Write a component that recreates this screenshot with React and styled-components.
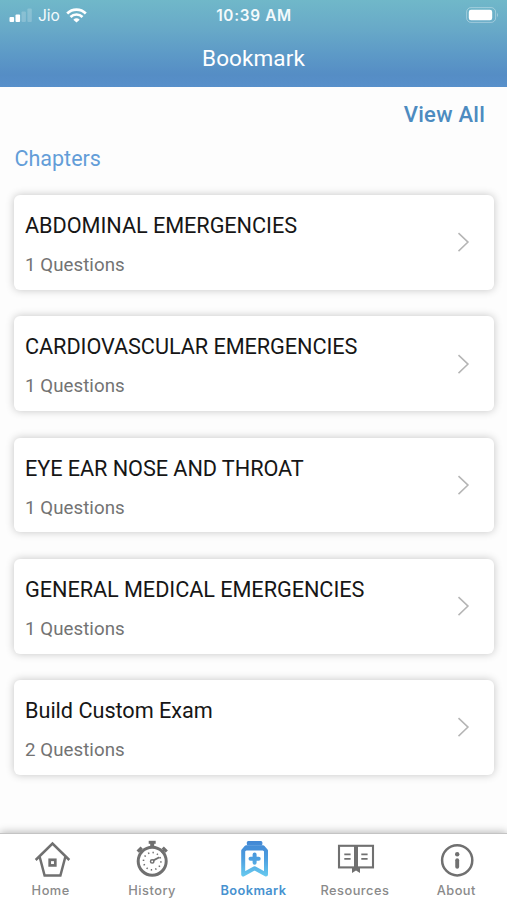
import React from 'react';
import styled, { createGlobalStyle } from 'styled-components';

const GlobalStyle = createGlobalStyle`
  * { box-sizing: border-box; }
  body { margin: 0; background: #fdfdfd; font-family: Roboto, "Liberation Sans", sans-serif; }
`;

const Screen = styled.div`
  display: flex;
  flex-direction: column;
  width: 507px;
  height: 900px;
  overflow: hidden;
  background: #fdfdfd;
`;

const Header = styled.header`
  flex: none;
  height: 87px;
  background: linear-gradient(180deg, #70b8c9 0%, #69abc8 30%, #5d9ac7 62%, #558dc5 86%, #5890cb 100%);
  color: #fff;
`;

const StatusBar = styled.div`
  display: grid;
  grid-template-columns: 1fr auto 1fr;
  align-items: center;
  height: 30px;
  padding: 0 8px 0 9px;
  color: #f3fafc;
`;

const Carrier = styled.div`
  display: flex;
  align-items: center;
  gap: 6px;
  font: 400 15.5px/30px Inter, sans-serif;

  svg { margin-top: -1px; }
`;

const Clock = styled.div`
  padding-top: 1px;
  font: 600 15.3px/30px Inter, sans-serif;
  letter-spacing: 0.7px;
`;

const BatterySlot = styled.div`
  display: flex;
  justify-content: flex-end;

  svg { margin-top: -1px; }
`;

const Title = styled.h1`
  margin: 0;
  padding-top: 13.5px;
  text-align: center;
  font-size: 22.5px;
  line-height: 28px;
  font-weight: 400;
  letter-spacing: 0.1px;
`;

const Content = styled.main`
  flex: 1;
  min-height: 0;
  padding: 14px 13px 0 14px;
`;

const ViewAll = styled.div`
  padding-right: 9px;
  text-align: right;
  font-size: 22px;
  line-height: 28px;
  font-weight: 500;
  letter-spacing: 0.25px;
  color: #4d8bc0;
`;

const SectionTitle = styled.h2`
  margin: 15.6px 0 22.4px;
  padding-left: 0.5px;
  font-size: 21.5px;
  line-height: 28px;
  font-weight: 400;
  letter-spacing: 0;
  color: #639dd8;
`;

const CardList = styled.div`
  display: flex;
  flex-direction: column;
  gap: 26.6px;
`;

const Card = styled.article`
  display: flex;
  align-items: center;
  justify-content: space-between;
  height: 94.7px;
  padding: 0 24px 0 11px;
  border-radius: 6px;
  background: #fff;
  box-shadow: 0 0 8px rgba(0, 0, 0, 0.23);
`;

const CardText = styled.div`
  padding-top: 5.4px;
`;

const CardTitle = styled.h3`
  margin: 0;
  font-size: 21.7px;
  line-height: 28px;
  font-weight: 400;
  letter-spacing: ${(p) => p.$tracking}px;
  color: #161616;
`;

const CardMeta = styled.p`
  margin: 12px 0 0;
  font-size: 18.7px;
  line-height: 26px;
  letter-spacing: 0.05px;
  color: #737373;
`;

const TabBar = styled.nav`
  flex: none;
  display: grid;
  grid-template-columns: repeat(5, 1fr);
  height: 67px;
  border-top: 1px solid #c4c4c4;
  background: #fff;
  box-shadow: 0 -1px 8px rgba(0, 0, 0, 0.28);
`;

const Tab = styled.div`
  display: flex;
  flex-direction: column;
  align-items: center;
  padding-top: 5px;
  color: ${(p) => (p.$active ? '#4792d0' : '#8a8a8a')};
  font-family: Inter, sans-serif;
  font-size: 12.8px;
  line-height: 18px;
  font-weight: ${(p) => (p.$active ? 600 : 500)};
  letter-spacing: ${(p) => p.$tracking}px;

  svg { display: block; margin-bottom: 3px; }
`;

const SignalIcon = () => (
  <svg width="23" height="14" viewBox="0 0 23 14" fill="#fff">
    <rect x="0.5" y="9" width="4.6" height="5" rx="1" />
    <rect x="6.5" y="6.5" width="4.6" height="7.5" rx="1" />
    <rect x="12.5" y="3.5" width="4.4" height="10.5" rx="1" opacity=".2" />
    <rect x="18.4" y="0.5" width="4.4" height="13.5" rx="1" opacity=".2" />
  </svg>
);

const WifiIcon = () => (
  <svg width="21" height="15" viewBox="0 0 21 15" fill="none" stroke="#fff" strokeWidth="2.7">
    <path d="M1.2 5.5a13.2 13.2 0 0 1 18.6 0" />
    <path d="M4.5 9a8.5 8.5 0 0 1 12 0" />
    <path d="M10.5 14.6 7.3 11.7a4.7 4.7 0 0 1 6.4 0Z" fill="#fff" stroke="none" />
  </svg>
);

const BatteryIcon = () => (
  <svg width="33" height="16" viewBox="0 0 33 16">
    <rect x=".6" y=".6" width="29" height="14.8" rx="4.4" fill="none" stroke="#fff" strokeOpacity=".35" />
    <rect x="2.8" y="2.8" width="23.4" height="10.4" rx="2.2" fill="#fff" />
    <path d="M31 5.6q1.6 2.4 0 4.8Z" fill="#fff" opacity=".5" />
  </svg>
);

const Chevron = () => (
  <svg width="13" height="20" viewBox="0 0 13 20" fill="none" stroke="#b5b5b5" strokeWidth="1.5">
    <path d="M1.5 1.1 11 10.1 1.5 19.1" />
  </svg>
);

const HomeIcon = () => (
  <svg width="40" height="40" viewBox="0 0 40 40" fill="none" stroke="#707070" strokeWidth="2.5">
    <path d="M4.7 21 21.5 4.6 38.3 21" />
    <path d="M8.7 18 13.6 36.6h15.8L34.3 18" />
    <rect x="18.7" y="20.8" width="5.6" height="5.6" strokeWidth="2.7" />
  </svg>
);

const HistoryIcon = () => (
  <svg width="40" height="40" viewBox="0 0 40 40" fill="none" stroke="#707070">
    <circle cx="20.2" cy="22.2" r="14" strokeWidth="3" />
    <circle cx="20.2" cy="22.2" r="8.7" strokeWidth="1.6" strokeDasharray="1.4 3.155" />
    <circle cx="20.2" cy="22.4" r="1.7" strokeWidth="1.5" />
    <path d="m21.4 21.4 6-3.2" strokeWidth="1.8" />
    <path d="M16.7 3.3h7" strokeWidth="3" />
    <path d="M20.2 3v6" strokeWidth="4" />
    <path d="m5.7 12.7 4-4M34.7 12.7l-4-4" strokeWidth="3.3" />
    <path d="m7.8 10.8 3 3M32.6 10.8l-3 3" strokeWidth="2" />
  </svg>
);

const BookmarkIcon = () => (
  <svg width="40" height="40" viewBox="0 0 40 40">
    <defs>
      <linearGradient id="ribbon" gradientUnits="userSpaceOnUse" x1="0" y1="2" x2="0" y2="38">
        <stop offset="0" stopColor="#4287d4" />
        <stop offset=".5" stopColor="#4d9fe0" />
        <stop offset="1" stopColor="#68ccf0" />
      </linearGradient>
    </defs>
    <g fill="none" stroke="url(#ribbon)" strokeLinejoin="round">
      <rect x="14.4" y="2.6" width="14.4" height="3.4" rx="1" fill="url(#ribbon)" strokeWidth="1.2" />
      <path d="M10.2 35.6V11.8l3-3.5h16.8l3 3.5v23.8l-11.4-6.4Z" strokeWidth="4" />
      <path d="M21.6 15.6v8.2M17.5 19.7h8.2" strokeWidth="4" strokeLinecap="round" />
    </g>
    <path d="M12 9.5h19.2v2H12Z" fill="#468fd8" />
  </svg>
);

const ResourcesIcon = () => (
  <svg width="40" height="40" viewBox="0 0 40 40" fill="none" stroke="#707070" strokeWidth="2.1">
    <rect x="4" y="6.8" width="34" height="21.6" />
    <path d="M21 6v22.6" strokeWidth="4" />
    <path d="M17 28.5h8V34l-4-2.5-4 2.5Z" fill="#707070" stroke="none" />
    <path d="M9.3 15.3h6.3M9.3 19.8h6.3M26.3 15.3h6.3M26.3 19.8h6.3" strokeWidth="1.7" />
  </svg>
);

const AboutIcon = () => (
  <svg width="40" height="40" viewBox="0 0 40 40" fill="none" stroke="#707070">
    <circle cx="21.2" cy="21.3" r="15.1" strokeWidth="2.5" />
    <circle cx="21.2" cy="15.2" r="2.2" fill="#707070" stroke="none" />
    <path d="M21.2 21.3v6.5" strokeWidth="3.9" strokeLinecap="round" />
  </svg>
);

const chapters = [
  { title: 'ABDOMINAL EMERGENCIES', count: 1, tracking: -0.06 },
  { title: 'CARDIOVASCULAR EMERGENCIES', count: 1, tracking: -0.07 },
  { title: 'EYE EAR NOSE AND THROAT', count: 1, tracking: -0.07 },
  { title: 'GENERAL MEDICAL EMERGENCIES', count: 1, tracking: -0.06 },
  { title: 'Build Custom Exam', count: 2, tracking: -0.04 },
];

const tabs = [
  { label: 'Home', Icon: HomeIcon, tracking: 0.5 },
  { label: 'History', Icon: HistoryIcon, tracking: 0.5 },
  { label: 'Bookmark', Icon: BookmarkIcon, tracking: 0.4, active: true },
  { label: 'Resources', Icon: ResourcesIcon, tracking: 0.5 },
  { label: 'About', Icon: AboutIcon, tracking: 0.5 },
];

export default function App() {
  return (
    <>
      <GlobalStyle />
      <Screen>
        <Header>
          <StatusBar>
            <Carrier>
              <SignalIcon />
              Jio
              <WifiIcon />
            </Carrier>
            <Clock>10:39 AM</Clock>
            <BatterySlot>
              <BatteryIcon />
            </BatterySlot>
          </StatusBar>
          <Title>Bookmark</Title>
        </Header>
        <Content>
          <ViewAll>View All</ViewAll>
          <SectionTitle>Chapters</SectionTitle>
          <CardList>
            {chapters.map(({ title, count, tracking }) => (
              <Card key={title}>
                <CardText>
                  <CardTitle $tracking={tracking}>{title}</CardTitle>
                  <CardMeta>{count} Questions</CardMeta>
                </CardText>
                <Chevron />
              </Card>
            ))}
          </CardList>
        </Content>
        <TabBar>
          {tabs.map(({ label, Icon, tracking, active }) => (
            <Tab key={label} $active={active} $tracking={tracking}>
              <Icon />
              {label}
            </Tab>
          ))}
        </TabBar>
      </Screen>
    </>
  );
}
